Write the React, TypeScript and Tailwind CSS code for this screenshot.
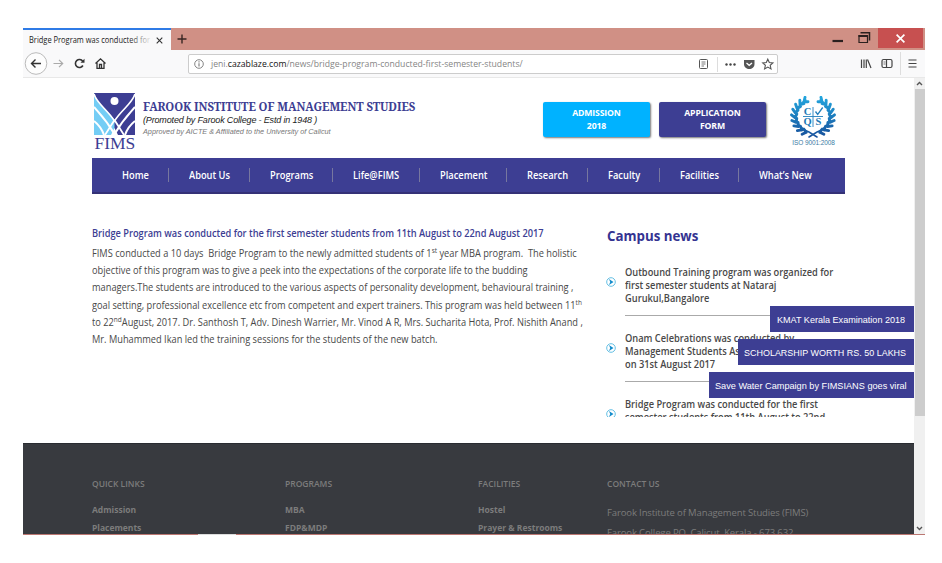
import React from "react";

const sans = "font-['Open_Sans','Liberation_Sans',sans-serif]";
const arial = "font-['Liberation_Sans',Arial,sans-serif]";

function TabStrip() {
  return (
    <div className="flex h-[22px] shrink-0 bg-[#d09085]">
      <div className="flex w-[148px] items-center border-t-2 border-[#2f7be6] bg-[#f9f9fa] pl-[6px]">
        <div className="relative w-[124px] overflow-hidden whitespace-nowrap text-[8.800px] leading-[20px] text-[#222]">
          <div className="origin-left scale-x-[0.850]">Bridge Program was conducted for first</div>
          <div className="absolute right-0 top-0 h-full w-6 bg-linear-to-r from-transparent to-[#f9f9fa]" />
        </div>
        <svg className="ml-[3px] h-[7px] w-[7px]" viewBox="0 0 7 7" stroke="#333" strokeWidth="1.1"><path d="M.7.7l5.6 5.6M6.3.7L.7 6.3" /></svg>
      </div>
      <svg className="ml-[6px] mt-[6px] h-[10px] w-[10px]" viewBox="0 0 10 10" stroke="#382522" strokeWidth="1.4"><path d="M5 .5v9M.5 5h9" /></svg>
      <div className="grow" />
      <svg className="h-[22px] w-[50px]" viewBox="0 0 50 22" fill="none" stroke="#2b201f">
        <path d="M4.500 13H15" strokeWidth="2.2" />
        <path d="M31 7.500H39.500v7h-8.500z" strokeWidth="1.200" />
        <path d="M30.500 8H40" strokeWidth="2" />
        <path d="M32.500 4.800H41.500V12.500" strokeWidth="1.500" />
      </svg>
      <div className="flex h-[20px] w-[45px] items-center justify-center bg-[#c75050]">
        <svg className="h-[9px] w-[9px]" viewBox="0 0 9 9" stroke="#fff" strokeWidth="1.700"><path d="M.6.6l7.800 7.800M8.400.6L.6 8.400" /></svg>
      </div>
      <div className="w-[2px]" />
    </div>
  );
}

function ToolBar() {
  return (
    <div className="flex h-[28px] shrink-0 items-center border-b border-[#e8e8e8] bg-[#f9f9fa]">
      <svg className="h-[27px] w-[90px] shrink-0" viewBox="0 0 90 27" fill="none" stroke="#333" strokeWidth="1.4">
        <circle cx="13" cy="13.500" r="10.800" fill="#fdfdfd" stroke="#bbb" strokeWidth="1" />
        <path d="M8.500 13.500H18M12.500 9.500l-4 4 4 4" />
        <path d="M30.500 13.500h9M36 9.800l3.700 3.700L36 17.200" stroke="#aaa" strokeWidth="1.2" />
        <path d="M59.700 11.200a4 4 0 1 0 .2 4.300" strokeWidth="1.600" />
        <path d="M61.500 8.700v4h-4z" fill="#333" stroke="none" />
        <path d="M72.500 13.500l5-4.700 5 4.700M74 12.800v5.500h7v-5.500M76.500 18.300v-3.800h2v3.800" strokeWidth="1.300" />
      </svg>
      <div className="ml-[75px] flex h-[20px] w-[590px] shrink-0 items-center rounded-[2px] border border-[#ccc] bg-white">
        <svg className="ml-[5px] h-[10px] w-[10px]" viewBox="0 0 10 10" fill="none" stroke="#777"><circle cx="5" cy="5" r="4.300" strokeWidth=".9" /><path d="M5 4.300v3.200M5 2.300v1.100" strokeWidth="1.100" /></svg>
        <div className="ml-[7px] origin-left scale-x-[0.910] whitespace-nowrap pt-px text-[9.500px] leading-[18px] text-[#858585]">
          jeni.<span className="text-[#111]">cazablaze.com</span>/news/bridge-program-conducted-first-semester-students/
        </div>
        <svg className="ml-auto h-[18px] w-[84px] shrink-0" viewBox="0 0 84 18" fill="none" stroke="#555">
          <rect x="6.500" y="4.500" width="8" height="9" rx="1" />
          <path d="M8.500 7h4M8.500 9h4M8.500 11h2.500" strokeWidth=".8" />
          <path d="M24.500 2v15" stroke="#ddd" />
          <g fill="#444" stroke="none"><circle cx="33.500" cy="9.500" r="1.200" /><circle cx="37.500" cy="9.500" r="1.200" /><circle cx="41.500" cy="9.500" r="1.200" /></g>
          <path d="M51 5h10.500v4c0 6.700-10.500 6.700-10.500 0z" fill="#555" stroke="none" />
          <path d="M53.500 8l2.700 2.300L59 8" stroke="#fff" strokeWidth="1.300" />
          <path d="M74.800 4.200l1.500 3.300 3.600.4-2.700 2.400.8 3.600-3.200-1.800-3.200 1.800.8-3.600-2.700-2.400 3.600-.4z" strokeWidth="1.100" />
        </svg>
      </div>
      <svg className="ml-auto h-[27px] w-[68px] shrink-0" viewBox="0 0 68 27" fill="none" stroke="#444" strokeWidth="1.200">
        <path d="M4.500 9.500v8.500M7 9.500v8.500M9.300 9.500v8.500M10.500 9.500l3.500 8.500" />
        <rect x="25" y="9.500" width="10" height="8" rx="1.500" /><path d="M29.500 9.500v8" /><path d="M26.500 12h2M26.500 14h2" strokeWidth=".7" />
        <path d="M43.500 2v23" stroke="#ddd" strokeWidth="1" />
        <path d="M51.500 10h8M51.500 13.500h8M51.500 17h8" />
      </svg>
    </div>
  );
}

function FimsMark() {
  return (
    <svg className="h-[42px] w-[41px]" viewBox="0 0 41 42">
      <rect width="41" height="42" fill="#3d3e93" />
      <path d="M0 0C3 11 13 16 20.500 27V42H0z" fill="#74cdf5" />
      <g fill="none" stroke="#fff">
        <path d="M0 1C3 11 13 16 20.500 28C28 16 38 11 41 1" strokeWidth="1.700" />
        <path d="M0 14C5 20 12 26 21 42M0 28C5 32 8 36 10 42" strokeWidth="2" />
        <path d="M41 14C36 20 29 26 20 42M41 28C36 32 33 36 31 42" strokeWidth="2" />
        <path d="M20.500 27L30 42M20.500 27L11 42" strokeWidth="1.800" />
      </g>
      <path d="M20.500 35l3.500 7h-7z" fill="#fff" />
      <circle cx="20.500" cy="8" r="4" fill="#fff" />
    </svg>
  );
}

const leaves = [0, 1, 2, 3, 4, 5, 6, 7, 8];

function Emblem() {
  return (
    <svg className="h-[42px] w-[48px]" viewBox="0 0 48 42">
      <defs><linearGradient id="laurel" x1="0" y1="0" x2="0" y2="42" gradientUnits="userSpaceOnUse"><stop stopColor="#22a7df" /><stop offset="1" stopColor="#174f9a" /></linearGradient></defs>
      <g fill="none" stroke="url(#laurel)" strokeLinecap="round">
        <path d="M17 4C3 11 3 30 20 36L28 41M31 4C45 11 45 30 28 36L20 41" strokeWidth="1.500" />
        {leaves.map((n) => {
          const a = ((240 - n * 16) * Math.PI) / 180;
          const x = Math.cos(a) * 18;
          const y = 20.5 + Math.sin(a) * 17;
          const ox = Math.cos(a + 0.75) * 4.6;
          const oy = Math.sin(a + 0.75) * 4.6;
          const ix = Math.cos(a + 2.1) * 4;
          const iy = Math.sin(a + 2.1) * 4;
          return (
            <g key={n} strokeWidth="2.900">
              <path d={`M${24 + x} ${y}l${ox} ${oy}M${24 + x} ${y}l${ix} ${iy}`} />
              <path d={`M${24 - x} ${y}l${-ox} ${oy}M${24 - x} ${y}l${-ix} ${iy}`} />
            </g>
          );
        })}
      </g>
      <g fill="none" stroke="#2480bd" strokeWidth=".9"><path d="M24 11v20M14 20.500h20" /><path d="M26.500 15.500l2.200 3 5-7" strokeWidth="1.300" /></g>
      <g fill="#2179b5" fontFamily="Liberation Serif" fontSize="10.500" fontWeight="bold" textAnchor="middle"><text x="18.500" y="19">C</text><text x="18.500" y="29">Q</text><text x="29.500" y="29">S</text></g>
    </svg>
  );
}

function SiteHeader() {
  return (
    <header className="flex h-[80px] pl-[69px]">
      <div className="mt-[15px] w-[46px] pl-[2px]">
        <FimsMark />
        <div className="whitespace-nowrap pl-[0.500px] font-['Liberation_Serif',serif] text-[17.500px] leading-[17px] text-[#3d3e93]">FIMS</div>
      </div>
      <div className="mt-[21px] w-[400px] pl-[5px]">
        <div className="origin-left scale-x-[0.907] whitespace-nowrap font-['Noto_Serif','Liberation_Serif',serif] text-[12.500px] font-bold leading-[15px] tracking-[-0.1px] text-[#3d3e93]">FAROOK INSTITUTE OF MANAGEMENT STUDIES</div>
        <div className={`${arial} whitespace-nowrap text-[9px] italic leading-[12px] tracking-[-0.16px] text-[#222]`}>(Promoted by Farook College - Estd in 1948 )</div>
        <div className={`${arial} whitespace-nowrap text-[7.300px] italic leading-[11px] text-[#777]`}>Approved by AICTE &amp; Affiliated to the University of Calicut</div>
      </div>
      <div className="ml-[5px] mt-[24px] flex h-[35px] gap-[9px] text-center text-[8.700px] font-bold leading-[12.800px] tracking-[-0.15px] text-white">
        <div className="w-[107px] rounded-[2px] bg-[#00b2ff] pt-[5px] shadow-[1px_1px_2px_#777]">ADMISSION<br />2018</div>
        <div className="w-[107px] rounded-[2px] bg-[#3d3e93] pt-[5px] shadow-[1px_1px_2px_#777]">APPLICATION<br />FORM</div>
      </div>
      <div className="ml-[23px] mt-[18px] flex w-[48px] flex-col items-center">
        <Emblem />
        <div className={`${arial} whitespace-nowrap pl-px pt-px text-[6.500px] leading-[8px] tracking-[-0.1px] text-[#3b7ba5]`}>ISO 9001:2008</div>
      </div>
    </header>
  );
}

const menu: [string, string][] = [
  ["Home", "w-[77px] pl-[30px]"],
  ["About Us", "w-[81px] pl-[20px]"],
  ["Programs", "w-[83px] pl-[20px]"],
  ["Life@FIMS", "w-[87px] pl-[20px]"],
  ["Placement", "w-[87px] pl-[20px]"],
  ["Research", "w-[81px] pl-[20px]"],
  ["Faculty", "w-[72px] pl-[20px]"],
  ["Facilities", "w-[79px] pl-[20px]"],
  ["What’s New", "w-[100px] pl-[20px]"],
];

function MainMenu() {
  return (
    <nav className="ml-[69px] flex h-[36px] w-[753px] items-center border-b-2 border-[#343176] bg-[#3d3e93] text-[10px] font-semibold text-white">
      {menu.map(([label, box], i) => (
        <div key={label} className={`${box} h-[14px] whitespace-nowrap leading-[14px] ${i < 8 ? "border-r border-[#77779f]" : ""}`}>
          <div className="origin-left scale-x-[0.930]">{label}</div>
        </div>
      ))}
    </nav>
  );
}

function Article() {
  const sup = "relative -top-[4px] align-baseline text-[7px] leading-none";
  return (
    <article className="w-[513px] whitespace-nowrap pt-[31px] text-[10px] leading-[17.200px] text-[#484848]">
      <div className="origin-left scale-x-[0.925]">
        <h1 className="h-[20px] font-semibold leading-[17px] text-[#3d3e93]">Bridge Program was conducted for the first semester students from 11th August to 22nd August 2017</h1>
        <div>FIMS conducted a 10 days&nbsp; Bridge Program to the newly admitted students of 1<span className={sup}>st</span> year MBA program.&nbsp; The holistic</div>
        <div>objective of this program was to give a peek into the expectations of the corporate life to the budding</div>
        <div>managers.The students are introduced to the various aspects of personality development, behavioural training ,</div>
        <div>goal setting, professional excellence etc from competent and expert trainers. This program was held between 11<span className={sup}>th</span></div>
        <div>to 22<span className={sup}>nd</span>August, 2017. Dr. Santhosh T, Adv. Dinesh Warrier, Mr. Vinod A R, Mrs. Sucharita Hota, Prof. Nishith Anand ,</div>
        <div>Mr. Muhammed Ikan led the training sessions for the students of the new batch.</div>
      </div>
    </article>
  );
}

const news = [
  ["Outbound Training program was organized for", "first semester students at Nataraj", "Gurukul,Bangalore"],
  ["Onam Celebrations was conducted by", "Management Students Association", "on 31st August 2017"],
  ["Bridge Program was conducted for the first", "semester students from 11th August to 22nd"],
];

function CampusNews() {
  return (
    <aside className="h-[223px] w-[240px] overflow-hidden">
      <h2 className="h-[71px] pl-[2px] pt-[32px] text-[13.300px] font-bold leading-[20px] text-[#343391]">Campus news</h2>
      {news.map((lines) => (
        <div key={lines[0]} className="flex h-[66px]">
          <svg className="ml-px mt-[12px] h-[10px] w-[10px] shrink-0" viewBox="0 0 10 10"><circle cx="5" cy="5" r="4.300" fill="#fff" stroke="#63bfe4" /><path d="M3 2l4.500 3L3 8l1.200-3z" fill="#138ccb" /></svg>
          <div className="ml-[9px] h-[51px] w-[210px] whitespace-nowrap border-b border-[#aaa] pt-px text-[10px] font-semibold leading-[13.200px] text-[#484848]">
            {lines.map((line) => <div key={line} className="origin-left scale-x-[0.928]">{line}</div>)}
          </div>
        </div>
      ))}
    </aside>
  );
}

function Footer() {
  const head = "h-[24px] leading-[14px] font-semibold";
  return (
    <footer className="flex h-[91px] shrink-0 overflow-hidden border-t border-[#292b31] bg-[#383a3f] pl-[69px] pt-[33px] text-[8.500px] font-bold text-[#7c7c7c]">
      <div className="w-[193px] leading-[18.300px]"><div className={head}>QUICK LINKS</div><div>Admission</div><div>Placements</div></div>
      <div className="w-[193px] leading-[18.300px]"><div className={head}>PROGRAMS</div><div>MBA</div><div>FDP&amp;MDP</div></div>
      <div className="w-[129px] leading-[18.300px]"><div className={head}>FACILITIES</div><div>Hostel</div><div>Prayer &amp; Restrooms</div></div>
      <div className="whitespace-nowrap leading-[19.500px]"><div className={head}>CONTACT US</div><div className="pt-[2px] text-[9.500px] font-normal tracking-[-0.12px]"><div>Farook Institute of Management Studies (FIMS)</div><div>Farook College PO, Calicut, Kerala - 673 632</div></div></div>
    </footer>
  );
}

function Notices() {
  return (
    <div className={`${arial} absolute right-0 top-[228px] flex flex-col items-end gap-[7px] whitespace-nowrap text-[9.800px] leading-[27px] text-white`}>
      <div className="h-[26px] w-[144px] bg-[#3d3e93] pl-[7px]"><div className="w-max origin-left scale-x-[0.925]">KMAT Kerala Examination 2018</div></div>
      <div className="h-[26px] w-[176px] bg-[#3d3e93] pl-[6px]"><div className="w-max origin-left scale-x-[0.915]">SCHOLARSHIP WORTH RS. 50 LAKHS</div></div>
      <div className="h-[26px] w-[205px] bg-[#3d3e93] pl-[6px]"><div className="w-max origin-left scale-x-[0.935]">Save Water Campaign by FIMSIANS goes viral</div></div>
    </div>
  );
}

export default function App() {
  return (
    <div className={`${sans} h-[563px] w-[942px] overflow-hidden bg-white pl-[23px] pt-[28px]`}>
      <div className="flex h-[507px] w-[902px] flex-col overflow-hidden">
        <TabStrip />
        <ToolBar />
        <div className="flex h-[456px] shrink-0">
          <div className="relative flex w-[891px] flex-col overflow-hidden">
            <SiteHeader />
            <MainMenu />
            <main className="flex h-[249px] shrink-0 pl-[69px]"><Article /><CampusNews /></main>
            <Footer />
            <Notices />
          </div>
          <div className="flex w-[11px] flex-col items-center bg-[#f0f0f0]">
            <svg className="h-[11px] w-[9px]" viewBox="0 0 9 11" fill="none" stroke="#555" strokeWidth="1.400"><path d="M2 7l2.500-2.500L7 7" /></svg>
            <div className="h-[327px] w-[10px] bg-[#cdcdcd]" />
            <svg className="mt-auto h-[11px] w-[9px]" viewBox="0 0 9 11" fill="none" stroke="#555" strokeWidth="1.400"><path d="M2 4l2.500 2.500L7 4" /></svg>
          </div>
        </div>
        <div className="flex h-px bg-[#bb7772] pl-[175px]"><div className="h-px w-[38px] bg-[#ddd]" /></div>
      </div>
    </div>
  );
}
